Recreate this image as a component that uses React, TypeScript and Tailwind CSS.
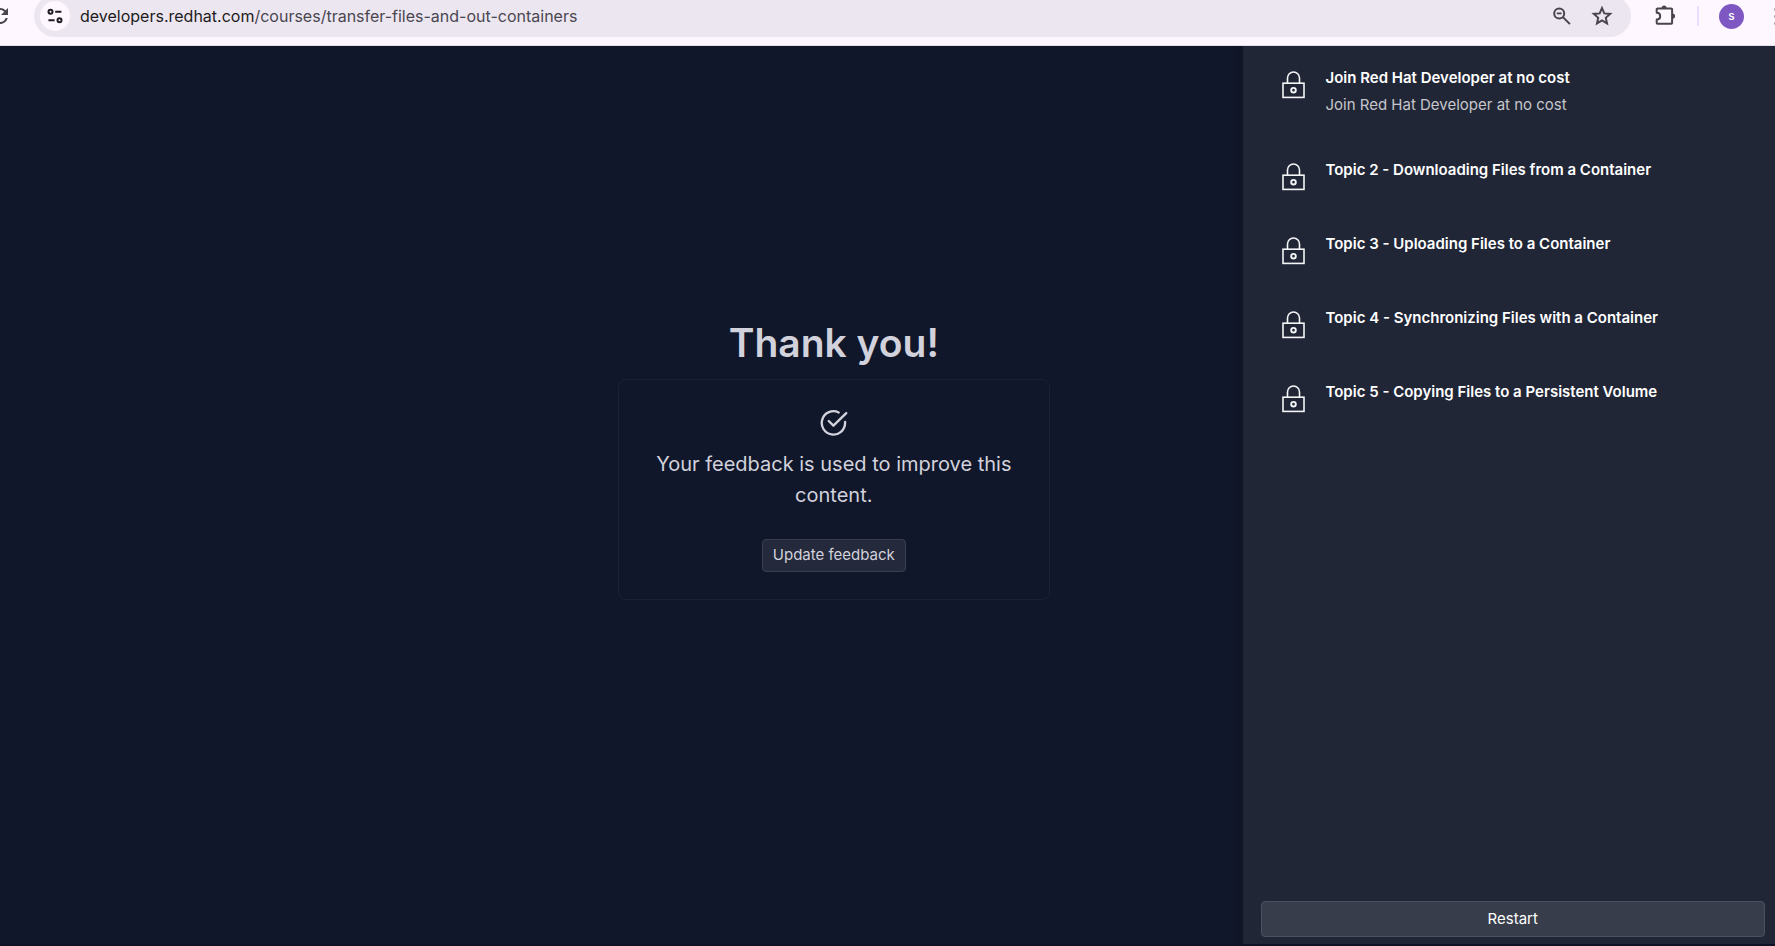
import { MdRefresh } from "react-icons/md";

type Topic = { title: string; subtitle?: string };

const topics: Topic[] = [
  { title: "Join Red Hat Developer at no cost", subtitle: "Join Red Hat Developer at no cost" },
  { title: "Topic 2 - Downloading Files from a Container" },
  { title: "Topic 3 - Uploading Files to a Container" },
  { title: "Topic 4 - Synchronizing Files with a Container" },
  { title: "Topic 5 - Copying Files to a Persistent Volume" },
];

function LockIcon() {
  return (
    <svg className="mt-[7px] h-7 w-6 shrink-0" viewBox="0 0 24 28" fill="none" stroke="#f4f5f7" strokeWidth="1.6" aria-hidden="true">
      <path d="M5.5 12V7a6 6 0 0 1 12 0v5" />
      <rect x="1" y="12.2" width="21" height="14.2" />
      <circle cx="11.5" cy="19.2" r="2.3" strokeWidth="1.9" />
    </svg>
  );
}

function CheckIcon() {
  return (
    <svg
      className="size-7"
      viewBox="0 0 24 24"
      fill="none"
      stroke="currentColor"
      strokeWidth="2"
      strokeLinecap="round"
      strokeLinejoin="round"
      aria-hidden="true"
    >
      <path d="M21.5 11V12a10 10 0 1 1-5.5-9" />
      <path d="M22.5 3.5 11.5 14.3l-4-4" />
    </svg>
  );
}

function SiteSettingsIcon() {
  return (
    <svg className="h-4 w-4" viewBox="0 0 16 16" fill="none" stroke="#1f1c24" strokeWidth="2" aria-hidden="true">
      <circle cx="3.5" cy="3.8" r="2" />
      <path d="M8.2 3.8h6.2M1.4 12.2h6.2" />
      <circle cx="12.5" cy="12.2" r="2" />
    </svg>
  );
}

function ZoomOutIcon() {
  return (
    <svg className="h-[18px] w-[18px]" viewBox="0 0 18 18" fill="none" stroke="#49454e" strokeWidth="2" aria-hidden="true">
      <circle cx="6.2" cy="6.4" r="5" />
      <path d="M3.8 6.4h4.8" strokeWidth="1.8" />
      <path d="M9.9 10.1l7 7" />
    </svg>
  );
}

function StarIcon() {
  return (
    <svg className="size-[22px]" viewBox="1.5 1.5 21 21" fill="none" stroke="#49454e" strokeWidth="1.9" aria-hidden="true">
      <path d="M12 4.400l2.200 5.100 5.600.5-4.200 3.700 1.200 5.400L12 16.300l-4.800 2.800 1.200-5.400-4.200-3.700 5.600-.5Z" />
    </svg>
  );
}

function ExtensionIcon() {
  return (
    <svg className="h-[22px] w-[22px]" viewBox="0 0 22 22" fill="none" aria-hidden="true">
      <path
        d="M2.6 4.5H16.2a.9.9 0 0 1 .9.9V18.8a.9.9 0 0 1-.9.9H2.6a.9.9 0 0 1-.9-.9V15.6c2.2 0 3.5-1.4 3.5-3.4S3.9 8.8 1.7 8.8V5.4a.9.9 0 0 1 .9-.9Z"
        stroke="#49454e"
        strokeWidth="2"
        strokeLinejoin="round"
      />
      <path d="M6.6 4a2.5 2.5 0 0 1 5 0ZM17.5 9.5a2.6 2.6 0 0 1 0 5.2Z" fill="#49454e" />
    </svg>
  );
}

function BrowserBar() {
  return (
    <header className="flex h-[46px] shrink-0 items-start overflow-hidden border-b border-[#e3dfe8] bg-[#fef7ff]">
      <button type="button" aria-label="Reload" className="-ml-3 mr-[22px] mt-1 shrink-0">
        <MdRefresh className="size-6 text-[#49454e]" />
      </button>
      <div className="-mt-[5px] flex h-[42px] min-w-0 flex-1 items-center rounded-full bg-[#ece6f0] pl-1.5 pr-[18px]">
        <button
          type="button"
          aria-label="View site information"
          className="flex size-[30px] shrink-0 items-center justify-center rounded-full bg-[#fef7ff]"
        >
          <SiteSettingsIcon />
        </button>
        <a href="#" className="ml-2.5 min-w-0 flex-1 truncate text-[16px] leading-6 text-[#4a4650]">
          <span className="text-[#1d1b20]">developers.redhat.com</span>/courses/transfer-files-and-out-containers
        </a>
        <button type="button" aria-label="Zoom" className="mr-5 shrink-0">
          <ZoomOutIcon />
        </button>
        <button type="button" aria-label="Bookmark this tab" className="shrink-0">
          <StarIcon />
        </button>
      </div>
      <div className="flex h-8 shrink-0 items-center pl-6">
        <button type="button" aria-label="Extensions" className="pb-0.5">
          <ExtensionIcon />
        </button>
        <span className="ml-5 h-5 w-0.5 bg-[#eaddff]" />
        <button
          type="button"
          aria-label="Profile"
          className="ml-5 flex size-[25px] items-center justify-center rounded-full bg-[#7e57c2] text-[12px] font-medium text-white"
        >
          s
        </button>
        <button type="button" aria-label="Menu" className="-mr-0.5 ml-[30px] flex flex-col gap-1">
          <span className="size-[3px] rounded-full bg-[#a29da8]" />
          <span className="size-[3px] rounded-full bg-[#a29da8]" />
          <span className="size-[3px] rounded-full bg-[#a29da8]" />
        </button>
      </div>
    </header>
  );
}

export default function App() {
  return (
    <div className="flex min-h-screen flex-col bg-[#11172b] font-['Inter','Liberation_Sans',sans-serif]">
      <BrowserBar />
      <div className="flex flex-1 border-b-2 border-[#0e1225]">
        <main className="flex min-w-0 flex-1 flex-col items-center justify-center border-r-8 border-[#101527] pb-[72px] pl-[24.4%] text-[#d2d2dc]">
          <h1 className="text-[39px] font-semibold leading-[48px]">Thank you!</h1>
          <section className="mt-3 flex w-full max-w-[432px] flex-col items-center rounded-lg border border-[#1b2133] px-8 pb-[27px] pt-[29px] text-center">
            <CheckIcon />
            <p className="mt-3 text-[20px] leading-[31px]">Your feedback is used to improve this content.</p>
            <button
              type="button"
              className="mt-7 h-[33px] rounded border border-[#3a3f50] bg-[#24293b] px-2.5 text-[15px]"
            >
              Update feedback
            </button>
          </section>
        </main>
        <aside className="flex w-[30%] shrink-0 flex-col justify-between bg-[#212637] pb-[7px]">
          <ol className="flex flex-col gap-[38px] pl-[39px] pr-4 pt-[18px]">
            {topics.map((topic) => (
              <li key={topic.title} className="flex min-h-9 gap-5">
                <LockIcon />
                <div className="text-[15px] leading-[27px]">
                  <h2 className="font-semibold text-white">{topic.title}</h2>
                  {topic.subtitle && <p className="text-[#c6c7cb]">{topic.subtitle}</p>}
                </div>
              </li>
            ))}
          </ol>
          <button
            type="button"
            className="ml-[18px] mr-2.5 h-9 rounded border border-[#4a505e] bg-[#373d4b] text-[15px] text-white"
          >
            Restart
          </button>
        </aside>
      </div>
    </div>
  );
}
